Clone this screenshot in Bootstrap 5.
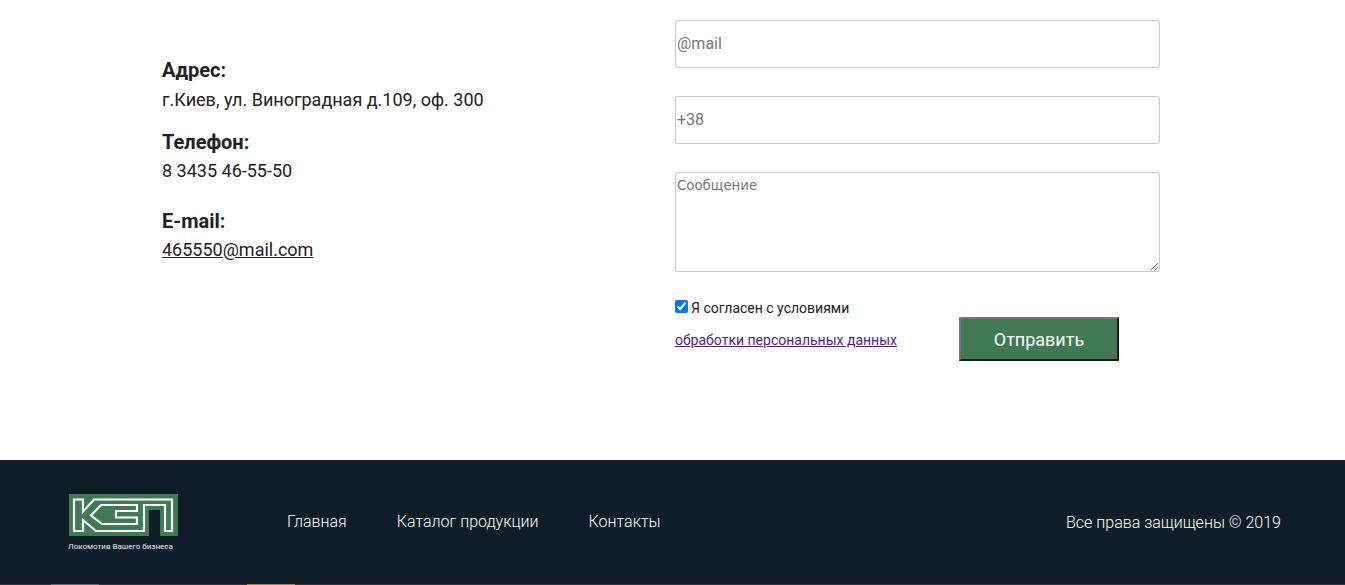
<!DOCTYPE html>
<html lang="ru">
<head>
<meta charset="utf-8">
<title>Контакты</title>
<link href="https://cdn.jsdelivr.net/npm/bootstrap@5.3.0/dist/css/bootstrap.min.css" rel="stylesheet">
<style>
html,body{height:585px;overflow:hidden}
body{font-family:Roboto,"Liberation Sans",sans-serif;color:#212121;background:#fff}
.contact-area{height:460px;padding-left:162px;padding-top:20px}
.info-col{width:513px;padding-top:37px;font-size:18px;line-height:27px}
.info-col h6{font-size:20px;font-weight:700;line-height:27px;margin:0 0 2px;color:#212121}
.info-col h6.tight{margin-bottom:1px}
.info-col p{margin:0}
.info-col a{color:#212121}
.g1{margin-bottom:16px}.g2{margin-bottom:24px}
.form-col{width:485px}
.fld{display:block;width:100%;height:48px;border:1px solid #c8c8c8;border-radius:3px;padding:0 1px 2px;font-size:16px;font-family:Roboto,sans-serif;margin-bottom:28px;outline:none}
.fld::placeholder{color:#757575;opacity:1}
textarea.fld{height:100px;padding:5px 1px;font-family:"DejaVu Sans",sans-serif;font-size:13.33px;margin-bottom:0;line-height:normal}
.agree-row{margin-top:28px;font-size:14px;color:#212121}
.agree-line{height:16px;line-height:16px;display:flex;align-items:center}
.agree-line input{width:13px;height:13px;margin:0 3px 3px 0}
.agree-link{color:#551a8b;display:block;margin-top:16px;line-height:16px}
.submit-btn{width:160px;height:44px;margin-left:62px;margin-top:17px;background:#3f7a52;color:#fff;font-size:18px;font-family:Roboto,sans-serif;border:2px solid;border-color:#767676 #1f1f1f #1f1f1f #767676;border-radius:0;padding:0}
.site-foot{height:125px;background:#0e1d28;position:relative;padding:0 64px 0 68px;color:#fff}
.foot-logo{width:112px;margin-top:34px;flex:none}
.foot-logo svg{display:block;margin-left:1px}
.foot-logo span{display:block;font-size:8px;line-height:9px;margin-top:6px;white-space:nowrap;color:#e8e8e8}
.foot-nav{margin-left:107px;gap:50px;margin-top:52px;font-size:16px;line-height:19px;font-weight:300}
.foot-nav a{color:#fff;text-decoration:none}
.foot-copy{margin-left:auto;margin-top:53px;font-size:16px;line-height:19px;font-weight:300}
.edge-strip{position:absolute;left:0;right:0;bottom:0;height:1px;background:#333;display:flex}
.edge-a{margin-left:51px;width:48px;background:#666}
.edge-b{margin-left:148px;width:48px;background:#c07a30}
</style>
</head>
<body>
<main class="contact-area d-flex">
  <section class="info-col">
    <div class="g1"><h6>Адрес:</h6><p>г.Киев, ул. Виноградная д.109, оф. 300</p></div>
    <div class="g2"><h6 class="tight">Телефон:</h6><p>8 3435 46-55-50</p></div>
    <div><h6 class="tight">E-mail:</h6><p><a href="#">465550@mail.com</a></p></div>
  </section>
  <form class="form-col">
    <input class="fld" type="text" placeholder="@mail">
    <input class="fld" type="text" placeholder="+38">
    <textarea class="fld" placeholder="Сообщение"></textarea>
    <div class="agree-row d-flex">
      <div>
        <label class="agree-line"><input type="checkbox" checked>Я согласен с условиями</label>
        <a class="agree-link" href="#">обработки персональных данных</a>
      </div>
      <button type="button" class="submit-btn">Отправить</button>
    </div>
  </form>
</main>
<footer class="site-foot d-flex">
  <div class="foot-logo">
    <svg width="109" height="42" viewBox="0 0 109 42" xmlns="http://www.w3.org/2000/svg">
      <path d="M0 0H109V42H91V16H80V42H0Z" fill="#3f7a52"/>
      <g fill="none" stroke="#fff" stroke-width="2.2">
        <path d="M5 5.5H14V17.7L25 5.5H103V37H96V11H75V37H27L14 26V37H5Z"/>
        <path d="M32 11H68V17H47V23.5H68V30H33L22 21.5Z"/>
      </g>
    </svg>
    <span>Локомотив Вашего бизнеса</span>
  </div>
  <nav class="foot-nav d-flex align-items-start">
    <a href="#">Главная</a><a href="#">Каталог продукции</a><a href="#">Контакты</a>
  </nav>
  <div class="foot-copy">Все права защищены © 2019</div>
  <div class="edge-strip"><i class="edge-a"></i><i class="edge-b"></i></div>
</footer>
</body>
</html>
